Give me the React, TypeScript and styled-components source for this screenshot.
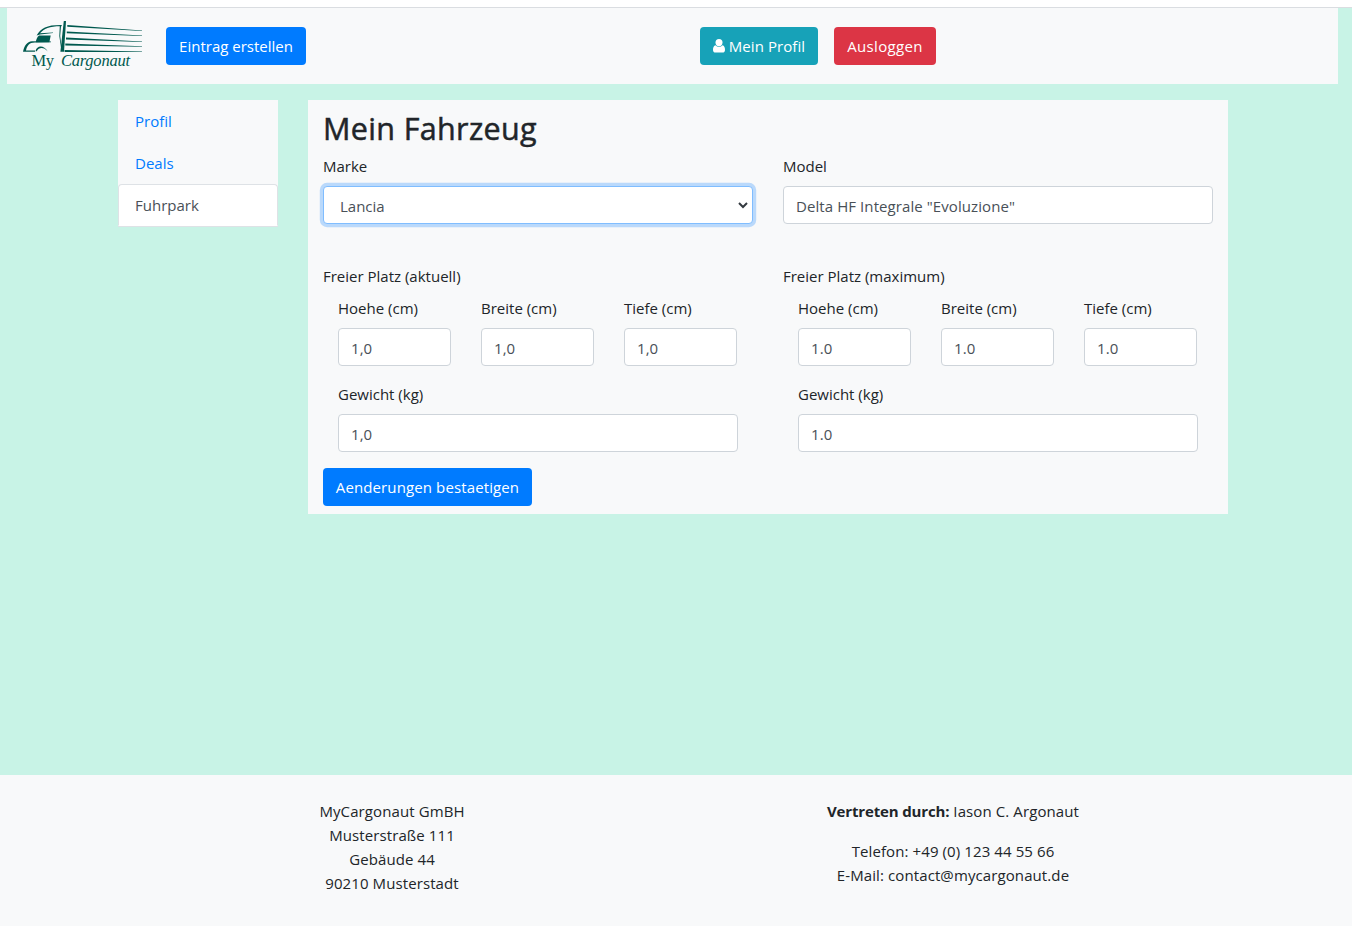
import React from "react";
import styled, { createGlobalStyle } from "styled-components";

const Global = createGlobalStyle`
  *, *::before, *::after { box-sizing: border-box; }
  body { margin: 0; background: #c8f3e6; color: #212529; font: 400 15px/24px "Open Sans", "Noto Sans", sans-serif; }
  input, select, button { font: inherit; letter-spacing: inherit; }
`;
const Page = styled.div`min-height: 926px; display: flex; flex-direction: column;`;
const TopEdge = styled.div`height: 8px; background: #fff; border-bottom: 1px solid #dadde1;`;
const Navbar = styled.nav`
  height: 76px; margin: 0 14px 0 7px; padding: 0 16px; background: #f8f9fa;
  display: flex; align-items: center;
`;
const Brand = styled.a`display: block; width: 120px; height: 50px; margin-right: 23px;`;
const Account = styled.div`display: flex; gap: 16px; margin-left: 394px;`;
const colors = { primary: "#007bff", info: "#17a2b8", danger: "#dc3545" };
const Button = styled.button<{ $tone: keyof typeof colors; $width: number; $spacing?: number }>`
  display: flex; align-items: center; justify-content: center; gap: 4px;
  width: ${p => p.$width}px; height: 38px; padding: 0; border: 0; border-radius: 4px;
  color: #fff; background: ${p => colors[p.$tone]}; white-space: nowrap;
  letter-spacing: ${p => p.$spacing ?? 0}px;
`;
const Container = styled.div`
  width: 1110px; margin: 16px 0 0 118px; display: grid;
  grid-template-columns: 160px 920px; gap: 30px; align-items: start;
`;
const Tabs = styled.ul`
  margin: 0; padding: 0; list-style: none; background: #f8f9fa; border-bottom: 1px solid #dee2e6;
`;
const Tab = styled.li<{ $active?: boolean }>`
  height: 42px; padding: 8px 16px; border: 1px solid ${p => (p.$active ? "#dee2e6" : "transparent")};
  border-bottom-color: ${p => (p.$active ? "#fff" : "transparent")};
  border-radius: 4px 4px 0 0; color: ${p => (p.$active ? "#495057" : "#007bff")};
  background: ${p => (p.$active ? "#fff" : "transparent")};
`;
const Panel = styled.main`height: 414px; padding: 8px 15px; background: #f8f9fa;`;
const Title = styled.h2`
  margin: 0 0 8px; padding-top: 2px; font-size: 30.5px; font-weight: 500; line-height: 36.4px; letter-spacing: 0.35px;
  -webkit-text-stroke: 0.5px currentColor;
`;
const Columns = styled.div`display: grid; grid-template-columns: 1fr 1fr; gap: 30px;`;
const Triple = styled.div`display: grid; grid-template-columns: repeat(3, 113px); gap: 30px;`;
const Space = styled.section`padding-top: 24px;`;
const SpaceFields = styled.div`padding: 0 15px;`;
const Caption = styled.div`margin-bottom: 8px;`;
const Field = styled.label`display: block; margin-bottom: 16px;`;
const Input = styled.input`
  display: block; width: 100%; height: 38px; padding: 8px 12px 6px; border: 1px solid #ced4da;
  border-radius: 4px; background: #fff; color: #495057; outline: none; letter-spacing: 0.08px;
`;
const SelectWrap = styled.div`position: relative;`;
const Select = styled.select`
  appearance: none; display: block; width: 100%; height: 38px; padding: 7px 16px 5px; border: 1px solid #80bdff;
  border-radius: 4px; background: #fff; color: #495057; outline: none; box-shadow: 0 0 0 3.2px rgba(0, 123, 255, .25);
`;
const Chevron = styled.svg`position: absolute; right: 5px; top: 15px; width: 10px; height: 8px;`;
const Footer = styled.footer`
  height: 151px; margin-top: auto; padding: 24px 118px 0 111.5px; background: #f8f9fa; letter-spacing: 0.1px;
  display: grid; grid-template-columns: 561px 561px; text-align: center;
`;
const Paragraph = styled.p`margin: 0 0 16px;`;
const Strong = styled.b`letter-spacing: -0.15px;`;

function Logo() {
  return (
    <svg width="120" height="50" viewBox="0 0 120 50" fill="#00594f">
      <path d="M0 30.8C1 25 4 20.5 9 20.2L28 20.6V21.3L12 21.5C6 21.5 4 25 3 29.4H12V30.8Z" />
      <path d="M12.5 30.2C14 24 21 24 24.7 30.6C21 26 16 26 13.8 30.2Z" />
      <path d="M16 14.4L27.7 14.6L26.4 21.2H12.8C13 18.5 14.2 16 16 14.4Z" />
      <path d="M13.6 14.4C18 7 24 3.8 38.7 4V5.2C27 5 21 7.5 17 12.2L30 11.4V12L17 13.5Z" />
      <path d="M36.8 5H38L37.2 15L38.6 26H37.9L36.3 15Z" />
      <path d="M40.8 0H43L41 30.8H37.4Z" />
      <path d="M44.3 3.9L119 9.5V10.1L44.3 5.8Z M43.8 10.4L119 14.5V15.1L43.8 12.2Z M43 16.5L119 20.4V21L43 18.4Z M42.3 22.5L119 25.2V25.8L42.3 24.4Z M41.6 29L119 30.4V31L41.6 30.9Z" />
      <text x="8.5" y="45" fontFamily="Liberation Serif, serif" fontSize="16.5" textLength="22.5">My</text>
      <text x="38" y="45" fontFamily="Liberation Serif, serif" fontSize="16.5" fontStyle="italic" textLength="69">Cargonaut</text>
    </svg>
  );
}

function UserIcon() {
  return (
    <svg width="12" height="14" viewBox="0 0 12 14" fill="#fff">
      <ellipse cx="6" cy="3.6" rx="3.5" ry="3.6" />
      <path d="M2.6 6.2C.6 6.5 0 8.7 0 11C0 12.6 1 13.6 2.5 13.6H9.5C11 13.6 12 12.6 12 11C12 8.7 11.4 6.5 9.4 6.2C8.5 7.2 7.3 7.8 6 7.8S3.5 7.2 2.6 6.2Z" />
    </svg>
  );
}

function Labelled({ label, value }: { label: string; value: string }) {
  return <Field><Caption>{label}</Caption><Input defaultValue={value} /></Field>;
}

function SpaceGroup({ title, value }: { title: string; value: string }) {
  return (
    <Space>
      <Caption>{title}</Caption>
      <SpaceFields>
        <Triple>{["Hoehe (cm)", "Breite (cm)", "Tiefe (cm)"].map(l => <Labelled key={l} label={l} value={value} />)}</Triple>
        <Labelled label="Gewicht (kg)" value={value} />
      </SpaceFields>
    </Space>
  );
}

export default function App() {
  return (
    <Page>
      <Global />
      <TopEdge />
      <Navbar>
        <Brand><Logo /></Brand>
        <Button $tone="primary" $width={140}>Eintrag erstellen</Button>
        <Account>
          <Button $tone="info" $width={118} $spacing={0.08}><UserIcon />Mein Profil</Button>
          <Button $tone="danger" $width={102} $spacing={0.35}>Ausloggen</Button>
        </Account>
      </Navbar>
      <Container>
        <Tabs><Tab>Profil</Tab><Tab>Deals</Tab><Tab $active>Fuhrpark</Tab></Tabs>
        <Panel>
          <Title>Mein Fahrzeug</Title>
          <Columns>
            <Field>
              <Caption>Marke</Caption>
              <SelectWrap>
                <Select defaultValue="Lancia"><option>Lancia</option></Select>
                <Chevron viewBox="0 0 10 8"><path d="M1 2l4 4 4-4" fill="none" stroke="#343a40" strokeWidth="2" /></Chevron>
              </SelectWrap>
            </Field>
            <Labelled label="Model" value={'Delta HF Integrale "Evoluzione"'} />
          </Columns>
          <Columns>
            <SpaceGroup title="Freier Platz (aktuell)" value="1,0" />
            <SpaceGroup title="Freier Platz (maximum)" value="1.0" />
          </Columns>
          <Button $tone="primary" $width={209} $spacing={0.12}>Aenderungen bestaetigen</Button>
        </Panel>
      </Container>
      <Footer>
        <Paragraph>MyCargonaut GmBH<br />Musterstraße 111<br />Gebäude 44<br />90210 Musterstadt</Paragraph>
        <div>
          <Paragraph><Strong>Vertreten durch:</Strong> Iason C. Argonaut</Paragraph>
          <Paragraph>Telefon: +49 (0) 123 44 55 66<br />E-Mail: contact@mycargonaut.de</Paragraph>
        </div>
      </Footer>
    </Page>
  );
}
